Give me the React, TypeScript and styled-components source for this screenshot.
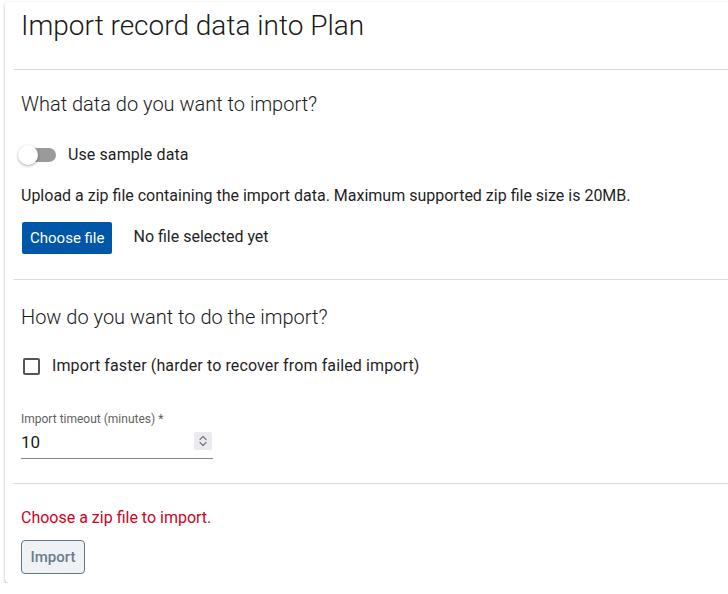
import React from 'react'
import styled, { createGlobalStyle } from 'styled-components'

const GlobalStyle = createGlobalStyle`
    html, body {
        margin: 0;
        padding: 0;
        background: #ffffff;
        overflow: hidden;
    }
    body {
        font-family: Roboto, "Liberation Sans", Arial, sans-serif;
        color: #1f1f1f;
    }
`

const ChevronUpDown: React.FC = () => (
    <svg width="10" height="14" viewBox="0 0 10 14" fill="none">
        <path d="M2 5.5 L5 2.5 L8 5.5" stroke="#7a7a80" strokeWidth="1.2" strokeLinecap="round" strokeLinejoin="round" />
        <path d="M2 8.5 L5 11.5 L8 8.5" stroke="#7a7a80" strokeWidth="1.2" strokeLinecap="round" strokeLinejoin="round" />
    </svg>
)

export default function App() {
    return (
        <>
            <GlobalStyle />
            <Card>
                <Header>
                    <Title>Import record data into Plan</Title>
                </Header>
                <Divider />
                <Section $top={22} $bottom={25}>
                    <SectionTitle>What data do you want to import?</SectionTitle>
                    <ToggleRow>
                        <Switch>
                            <Track />
                            <Thumb />
                        </Switch>
                        <OptionLabel>Use sample data</OptionLabel>
                    </ToggleRow>
                    <Hint>Upload a zip file containing the import data. Maximum supported zip file size is 20MB.</Hint>
                    <FileRow>
                        <PrimaryButton>Choose file</PrimaryButton>
                        <FileName>No file selected yet</FileName>
                    </FileRow>
                </Section>
                <Divider />
                <Section $top={25} $bottom={24}>
                    <SectionTitle>How do you want to do the import?</SectionTitle>
                    <CheckRow>
                        <CheckBox />
                        <OptionLabel $wide>Import faster (harder to recover from failed import)</OptionLabel>
                    </CheckRow>
                    <Field>
                        <FieldLabel>Import timeout (minutes) *</FieldLabel>
                        <InputRow>
                            <InputValue>10</InputValue>
                            <Spinner>
                                <ChevronUpDown />
                            </Spinner>
                        </InputRow>
                    </Field>
                </Section>
                <Divider />
                <Footer>
                    <ErrorText>Choose a zip file to import.</ErrorText>
                    <DisabledButton disabled>Import</DisabledButton>
                </Footer>
            </Card>
        </>
    )
}

const Card = styled.div`
    margin: 2px 0 0 5px;
    width: 760px;
    background: #ffffff;
    border-radius: 4px;
    box-shadow: 0 1px 3px rgba(0, 0, 0, 0.28), 0 1px 1px rgba(0, 0, 0, 0.12);
    padding-bottom: 9px;
`

const Header = styled.div`
    padding: 8px 16px 27px;
`

const Title = styled.h1`
    margin: 0;
    font-size: 28px;
    line-height: 32px;
    font-weight: 300;
    color: #1a1a1a;
`

const Divider = styled.hr`
    margin: 0 0 0 8px;
    border: none;
    border-top: 1px solid #dcdcdc;
    height: 0;
`

const Section = styled.div<{ $top: number; $bottom: number }>`
    padding: ${({ $top }) => $top}px 16px ${({ $bottom }) => $bottom}px;
    display: flex;
    flex-direction: column;
`

const SectionTitle = styled.h2`
    margin: 0;
    font-size: 20px;
    line-height: 24px;
    font-weight: 300;
    color: #1a1a1a;
`

const ToggleRow = styled.div`
    display: flex;
    align-items: center;
    height: 24px;
    margin-top: 27px;
`

const Switch = styled.div`
    position: relative;
    width: 38px;
    height: 20px;
    margin-right: 9px;
    flex-shrink: 0;
`

const Track = styled.div`
    position: absolute;
    left: 7px;
    top: 3px;
    width: 28px;
    height: 14px;
    border-radius: 7px;
    background: #9a9a9a;
`

const Thumb = styled.div`
    position: absolute;
    left: -3px;
    top: 0;
    width: 20px;
    height: 20px;
    border-radius: 50%;
    background: #ffffff;
    box-shadow: 0 1px 3px rgba(0, 0, 0, 0.35);
`

const OptionLabel = styled.span<{ $wide?: boolean }>`
    font-size: 16px;
    line-height: 20px;
    color: #1f1f1f;
    letter-spacing: ${({ $wide }) => ($wide ? '0.12px' : '0.1px')};
`

const Hint = styled.p`
    margin: 19px 0 0;
    font-size: 16px;
    line-height: 20px;
    color: #1f1f1f;
`

const FileRow = styled.div`
    display: flex;
    align-items: center;
    margin-top: 16px;
`

const PrimaryButton = styled.button`
    height: 32px;
    padding: 0 8px;
    margin-left: 1px;
    border: none;
    border-radius: 2px;
    background: #0057a8;
    color: #ffffff;
    font-family: inherit;
    font-size: 15px;
`

const FileName = styled.span`
    margin-left: 21px;
    font-size: 16px;
    line-height: 20px;
    margin-top: -2px;
`

const CheckRow = styled.div`
    display: flex;
    align-items: center;
    height: 24px;
    margin-top: 25px;
`

const CheckBox = styled.span`
    box-sizing: border-box;
    width: 17px;
    height: 17px;
    margin: 0 12px 0 2px;
    border: 2px solid #555555;
    border-radius: 2px;
`

const Field = styled.div`
    display: flex;
    flex-direction: column;
    width: 192px;
    margin-top: 34px;
`

const FieldLabel = styled.label`
    font-size: 12px;
    line-height: 14px;
    color: #5f5f5f;
`

const InputRow = styled.div`
    display: flex;
    align-items: center;
    justify-content: space-between;
    height: 32px;
    border-bottom: 1px solid #858585;
`

const InputValue = styled.span`
    font-size: 17px;
    line-height: 20px;
    color: #1a1a1a;
`

const Spinner = styled.span`
    display: flex;
    align-items: center;
    justify-content: center;
    width: 18px;
    height: 18px;
    margin-right: 1px;
    margin-top: -2px;
    background: #ebebef;
    border-radius: 2px;
`

const Footer = styled.div`
    padding: 24px 16px 0;
    display: flex;
    flex-direction: column;
    align-items: flex-start;
`

const ErrorText = styled.p`
    margin: 0;
    font-size: 16px;
    line-height: 20px;
    color: #d0021b;
`

const DisabledButton = styled.button`
    margin-top: 12px;
    height: 34px;
    width: 64px;
    border: 1px solid #62788a;
    border-radius: 4px;
    background: #eef2f4;
    color: #6b7c8a;
    font-family: inherit;
    font-size: 15px;
    font-weight: 500;
`
